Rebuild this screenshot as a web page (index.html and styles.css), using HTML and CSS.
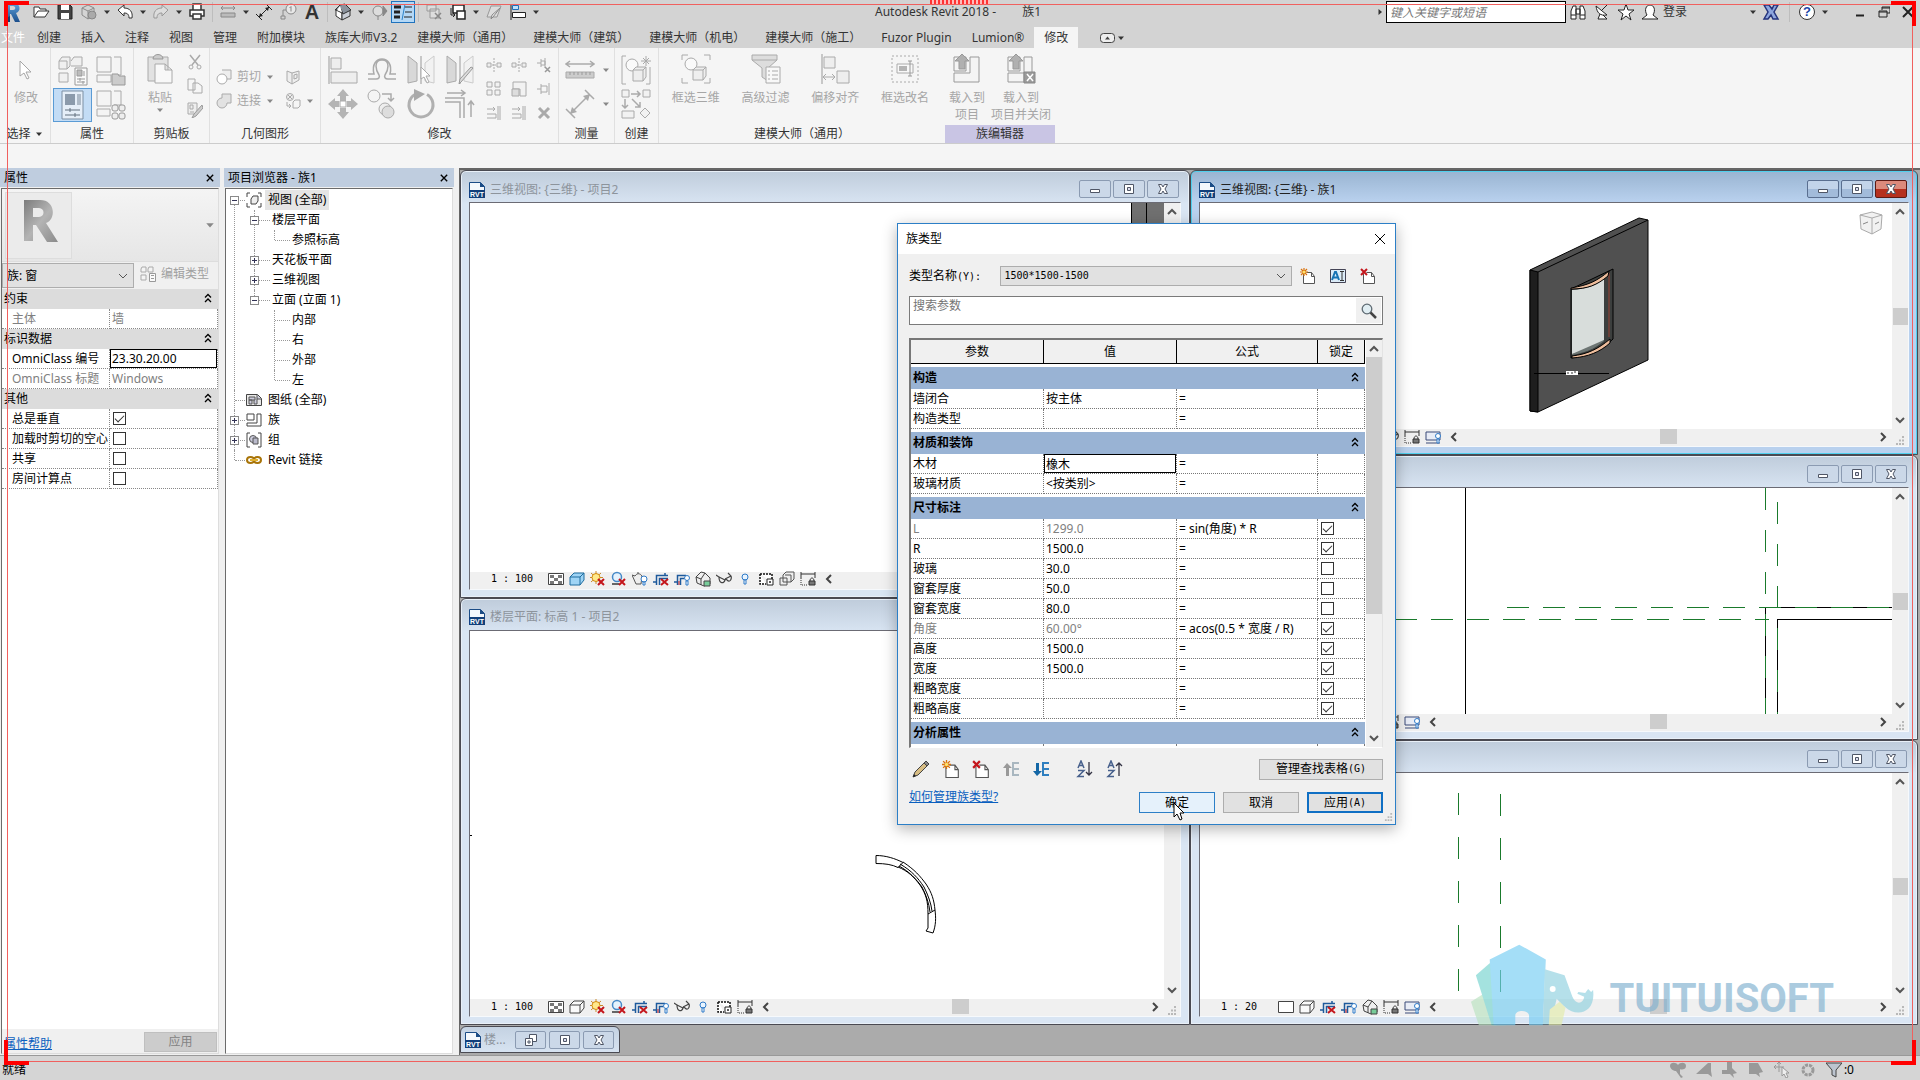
FILE: index.html
```html
<!DOCTYPE html>
<html lang="zh-CN">
<head>
<meta charset="utf-8">
<title>Autodesk Revit 2018 - 族1</title>
<link rel="stylesheet" href="styles.css">
</head>
<body>
<svg class="defs" aria-hidden="true">
  <defs>
    <linearGradient id="blueR" x1="0" y1="0" x2="0" y2="1"><stop offset="0" stop-color="#5fa3dc"/><stop offset="1" stop-color="#1c4f8c"/></linearGradient>
    <linearGradient id="greyR" x1="0" y1="0" x2="1" y2="1"><stop offset="0" stop-color="#7c7c7c"/><stop offset=".5" stop-color="#b4b4b4"/><stop offset="1" stop-color="#8b8b8b"/></linearGradient>
    <symbol id="caret" viewBox="0 0 8 8"><path d="M1 2.5h6L4 6z" fill="currentColor"/></symbol>
    <symbol id="logo" viewBox="0 0 24 24"><path fill="url(#blueR)" fill-rule="evenodd" d="M5 3h9c7 0 7 9 2 10l4 9h-5l-4-8h-1v8H5zm5 3v4h3c3 0 3-4 0-4z"/><path d="M5 19l5-3v6H5z" fill="#153d70"/></symbol>
    <!-- quick access toolbar -->
    <symbol id="open" viewBox="0 0 18 18"><path d="M2 14V4h5l1 2h6v3" fill="#fff" stroke="#333"/><path d="M2 14l4-6h11l-4 6z" fill="#fff" stroke="#333"/></symbol>
    <symbol id="save" viewBox="0 0 18 18"><path d="M2 2h12l2 2v12H2z" fill="#444" stroke="#222"/><path d="M5 2h8v5H5zM5 10h8v6H5z" fill="#fff"/></symbol>
    <symbol id="sync" viewBox="0 0 18 18"><path d="M2 5l6-3 6 3v7l-6 4-6-4zM2 5l6 3 6-3M8 8v8" fill="#d4d4d4" stroke="#8a8a8a"/><circle cx="12" cy="12" r="4" fill="#aaa" stroke="#888"/></symbol>
    <symbol id="undo" viewBox="0 0 18 18"><path d="M2 7l6-5v3c6 0 9 4 8 10h-3c0-4-2-5-5-5v3z" fill="#fff" stroke="#333"/></symbol>
    <symbol id="redo" viewBox="0 0 18 18"><path d="M16 7l-6-5v3C4 5 1 9 2 15h3c0-4 2-5 5-5v3z" fill="#ddd" stroke="#999"/></symbol>
    <symbol id="print" viewBox="0 0 18 18"><path d="M5 7V1h8v6M2 7h14v6H2z" fill="#fff" stroke="#333" stroke-width="1.5"/><path d="M5 11h8v5H5z" fill="#fff" stroke="#333" stroke-width="1.5"/></symbol>
    <symbol id="measure" viewBox="0 0 18 18"><path d="M2 5h14M4 3L2 5l2 2M14 3l2 2-2 2" fill="none" stroke="#888"/><path d="M2 10h14v4H2z" fill="#bbb" stroke="#888"/></symbol>
    <symbol id="dim" viewBox="0 0 18 18"><path d="M4 14L14 4M1 11l6 6M11 1l6 6" fill="none" stroke="#222"/><path d="M4 14l1-4 3 3zM14 4l-1 4-3-3z" fill="#222"/></symbol>
    <symbol id="tag" viewBox="0 0 18 18"><circle cx="12" cy="6" r="5" fill="#e8e8e8" stroke="#888"/><path d="M12 3.500v5M10.500 5L12 3.500M7 7H4v6M2 13h4v3H2z" fill="none" stroke="#888"/></symbol>
    <symbol id="house" viewBox="0 0 18 18"><path d="M2 7l6 3v7l-6-4z" fill="#fff" stroke="#333"/><path d="M8 10l8-3v6l-8 4z" fill="#c9ced6" stroke="#333"/><path d="M1 7l5-5 5-1 6 6-8 4-2-5z" fill="#8a929c" stroke="#333"/><path d="M3 7l3-4 2 6z" fill="#fff"/></symbol>
    <symbol id="section" viewBox="0 0 18 18"><circle cx="8" cy="8" r="5" fill="#ddd" stroke="#888"/><path d="M13 3l4 5-4 5zM8 13v4" fill="#888" stroke="#888"/></symbol>
    <symbol id="thin" viewBox="0 0 18 18"><path d="M0 4h7M0 9h6M0 14h6" stroke="#222" stroke-width="3"/><path d="M11 1L8 17" stroke="#2c83c9"/><path d="M11 4h7M11 9h7M10 14h8" stroke="#222"/></symbol>
    <symbol id="closehid" viewBox="0 0 18 18"><path d="M2 2h9v6H2zM5 6h9v9H5z" fill="#ddd" stroke="#999"/><path d="M10 10l6 6M16 10l-6 6" stroke="#888" stroke-width="1.500"/></symbol>
    <symbol id="switch" viewBox="0 0 18 18"><path d="M4 2h11v8H4z" fill="#fff" stroke="#222" stroke-width="1.500"/><path d="M8 8h8v8H8z" fill="#fff" stroke="#222" stroke-width="1.500"/><path d="M2 5v7h4M4 10l2 2-2 2" fill="none" stroke="#222"/></symbol>
    <symbol id="erase" viewBox="0 0 18 18"><path d="M2 14L6 3h10l-4 11z" fill="#ddd" stroke="#999"/><path d="M15 5l-7 9-2 2 1-4z" fill="#eee" stroke="#888"/></symbol>
    <symbol id="align" viewBox="0 0 18 18"><path d="M2 1v16" stroke="#222"/><path d="M3.500 2.500h6v4h-6z" fill="#bfe0fa" stroke="#1f6fb8"/><path d="M3.500 9.500h13v5h-13z" fill="#fff" stroke="#222"/></symbol>
    <symbol id="bino" viewBox="0 0 18 18"><path d="M2 16V8l2-5h3v13zM16 16V8l-2-5h-3v13zM7 6h4v5H7zM2 12h5M11 12h5" fill="#fff" stroke="#222"/></symbol>
    <symbol id="dish" viewBox="0 0 18 18"><path d="M3 3c1 7 4 10 11 9zM9 7l5-5M7 11l-2 5h9l-4-4" fill="#fff" stroke="#222"/></symbol>
    <symbol id="star" viewBox="0 0 18 18"><path d="M9 1l2 6h6l-5 4 2 6-5-4-5 4 2-6-5-4h6z" fill="#fff" stroke="#222"/></symbol>
    <symbol id="person" viewBox="0 0 18 18"><path d="M6 12c-3-5-1-10 3-10s6 5 3 10l5 4H1z" fill="#fff" stroke="#222"/></symbol>
    <symbol id="exch" viewBox="0 0 18 18"><path d="M2 2h5l3 4 2-4h4l-4 7 4 7h-5l-2-4-3 4H2l4-7z" fill="#8ea6de" stroke="#25337c" stroke-width="1.500"/></symbol>
    <!-- ribbon -->
    <symbol id="cursor" viewBox="0 0 14 20"><path d="M1 1v15l4-3 3 6 2-1-3-6h5z" fill="#fff" stroke="currentColor"/></symbol>
    <symbol id="types" viewBox="0 0 30 30"><path d="M1 5l3-4h8v9l-3 3H1zM13 5l3-4h8v9H13M1 17h9v9H1zM1 5h8v8" fill="#f0f0f0" stroke="#aaa"/><path d="M17 12h12v17H17z" fill="#fafafa" stroke="#999"/><path d="M19 14h5v6h-5zM26 15v5" fill="#bbb" stroke="#999"/><path d="M19 23h8M19 26h8M22 22v3M25 25v3" stroke="#999"/></symbol>
    <symbol id="family" viewBox="0 0 30 30"><path d="M1 1h14v15H1zM18 1h7v18h-7M1 19h14v7H1z" fill="#f4f4f4" stroke="#aaa"/><path d="M16 18h6l1 2h6v9H16z" fill="#ccc" stroke="#999"/></symbol>
    <symbol id="props" viewBox="0 0 24 30"><path d="M1 1h21v28H1z" fill="#e5eef8" stroke="#7d8fa3"/><path d="M4 4h10v11H4z" fill="#8b9aab"/><path d="M16 4h4v11h-4z" fill="#aebac7"/><path d="M4 20h15M4 25h15M9 18v4M14 23v4" stroke="#62707e"/></symbol>
    <symbol id="cat" viewBox="0 0 30 30"><path d="M1 1h14v15H1zM18 1h7v14h-7M1 19h13v7H1z" fill="#f4f4f4" stroke="#aaa"/><rect x="16" y="15" width="6" height="6" rx="2" fill="#eee" stroke="#999"/><rect x="23" y="15" width="6" height="6" rx="2" fill="#eee" stroke="#999"/><rect x="16" y="23" width="6" height="6" rx="2" fill="#eee" stroke="#999"/><rect x="23" y="23" width="6" height="6" rx="2" fill="#eee" stroke="#999"/></symbol>
    <symbol id="paste" viewBox="0 0 26 30"><path d="M1 3h20v24H1z" fill="#e2e2e2" stroke="#aaa"/><path d="M6 5c0-6 10-6 10 0z" fill="#ccc" stroke="#999"/><path d="M8 10h10l7 6v13H8zM18 10v6h7" fill="#f8f8f8" stroke="#aaa"/></symbol>
    <symbol id="cut" viewBox="0 0 16 16"><path d="M3 1l8 10M13 1L5 11" stroke="#aaa" stroke-width="1.500"/><circle cx="4" cy="13" r="2" fill="none" stroke="#aaa"/><circle cx="12" cy="13" r="2" fill="none" stroke="#aaa"/></symbol>
    <symbol id="copy" viewBox="0 0 16 16"><path d="M1 1h7v11H1zM6 5h5l4 3v7H6z" fill="#f6f6f6" stroke="#aaa"/></symbol>
    <symbol id="match" viewBox="0 0 16 16"><path d="M1 1h9v11H1zM3 3h3v4H3zM3 10h4" fill="#eee" stroke="#aaa"/><path d="M15 3L7 12l-2 4 4-2 7-8z" fill="#ccc" stroke="#999"/></symbol>
    <symbol id="joinA" viewBox="0 0 16 16"><path d="M6 1h9v9H9" fill="#eee" stroke="#aaa"/><circle cx="6" cy="10" r="5" fill="#fff" stroke="#aaa"/></symbol>
    <symbol id="joinB" viewBox="0 0 16 16"><path d="M6 1h9v9h-4a5 5 0 1 1-5-5z" fill="#e2e2e2" stroke="#aaa"/></symbol>
    <symbol id="cope" viewBox="0 0 16 16"><path d="M2 2l5 2 7-2v9l-7 4-5-3zM7 4v11M9 6l3-1v4l-3 1z" fill="#eee" stroke="#aaa"/></symbol>
    <symbol id="paintr" viewBox="0 0 16 16"><circle cx="5" cy="4" r="3.500" fill="#eee" stroke="#aaa"/><path d="M3 2l4 4M7 2L3 6M2 9v4h4M4 11l2 2-2 2M8 9l2-2h5v6l-2 2H8z" fill="none" stroke="#aaa"/></symbol>
    <symbol id="alignL" viewBox="0 0 30 30"><path d="M1 1v28" stroke="#999"/><path d="M3 3h10v11H3zM3 17h26v11H3z" fill="#eee" stroke="#aaa"/></symbol>
    <symbol id="offset" viewBox="0 0 30 30"><path d="M1 24h8c3 0 4-2 3-4-2-3-3-6-3-9 0-8 12-8 12 0 0 3-1 6-3 9-1 2 0 4 3 4h8M1 19h6c-5-20 21-20 16 0h6" fill="none" stroke="#aaa" stroke-width="1.500"/></symbol>
    <symbol id="mirrorA" viewBox="0 0 30 30"><path d="M2 1l9 7v18l-9 2z" fill="#d8d8d8" stroke="#aaa"/><path d="M28 1l-9 7v18l9 2z" fill="#f2f2f2" stroke="#ccc"/><path d="M15 1v28" stroke="#999"/><path d="M15 12v12l3-2 3 6 2-1-3-6h4z" fill="#fff" stroke="#aaa"/></symbol>
    <symbol id="mirrorB" viewBox="0 0 30 30"><path d="M2 1l9 7v18l-9 2z" fill="#d8d8d8" stroke="#aaa"/><path d="M28 1l-9 7v18l9 2z" fill="#f2f2f2" stroke="#ccc"/><path d="M15 1v28" stroke="#999"/><path d="M28 13L16 27l-2 2 1-5 11-12z" fill="#ddd" stroke="#999"/></symbol>
    <symbol id="move" viewBox="0 0 30 30"><path d="M15 0l6 7h-3v5h-6V7H9zM15 30l6-7h-3v-4h-6v4H9zM0 15l7-6v3h4v6H7v3zM30 15l-7-6v3h-4v6h4v3z" fill="#b4b4b4"/><path d="M12 12h6v6h-6z" fill="#fff" stroke="#aaa"/></symbol>
    <symbol id="copyR" viewBox="0 0 30 30"><circle cx="7" cy="7" r="6" fill="#f4f4f4" stroke="#aaa"/><circle cx="18" cy="20" r="6" fill="#eee" stroke="#aaa"/><circle cx="21" cy="23" r="6" fill="#ddd" stroke="#aaa"/><path d="M15 5h9v6M21 9l3 3 3-3" fill="none" stroke="#aaa" stroke-width="1.500"/></symbol>
    <symbol id="rotate" viewBox="0 0 30 30"><path d="M9 5.500a12 12 0 1 0 12 0" fill="none" stroke="#b0b0b0" stroke-width="3"/><path d="M8 0l11 5-11 7z" fill="#aaa"/></symbol>
    <symbol id="trim" viewBox="0 0 30 30"><path d="M0 9h19v20M0 13h15v16" fill="none" stroke="#aaa" stroke-width="1.500"/><path d="M2 4h17M16 1l4 3-4 3M26 28V12M23 16l3-4 3 4" fill="none" stroke="#aaa" stroke-width="1.500"/></symbol>
    <symbol id="split" viewBox="0 0 16 16"><path d="M1 6h4v4H1zM11 6h4v4h-4z" fill="#eee" stroke="#aaa"/><path d="M8 1v14M6 8h4" stroke="#aaa" stroke-dasharray="2 1"/></symbol>
    <symbol id="pinx" viewBox="0 0 16 16"><path d="M1 6h4M5 2v8M5 4h4v4H5M9 1v10" fill="none" stroke="#aaa"/><path d="M9 10l5 5M14 10l-5 5" stroke="#999" stroke-width="1.500"/></symbol>
    <symbol id="pin" viewBox="0 0 16 16"><path d="M1 8h4M5 3v10M5 5h6v6H5M13 2v12" fill="none" stroke="#aaa"/></symbol>
    <symbol id="array" viewBox="0 0 16 16"><path d="M1 1h5v5H1zM9 1h5v5H9zM1 9h5v5H1zM9 9h5v5H9z" fill="#f2f2f2" stroke="#aaa"/></symbol>
    <symbol id="scale" viewBox="0 0 16 16"><path d="M2 1h13v14H9V8H2z" fill="#f2f2f2" stroke="#aaa"/><path d="M1 8h7v7H1z" fill="#ddd" stroke="#aaa"/></symbol>
    <symbol id="ext" viewBox="0 0 16 16"><path d="M1 4h8M7 2l2 2-2 2M1 9h9v4H1M12 1v14M14 1v14" fill="none" stroke="#aaa"/></symbol>
    <symbol id="del" viewBox="0 0 16 16"><path d="M3 3l10 10M13 3L3 13" stroke="#aaa" stroke-width="3"/></symbol>
    <symbol id="ruler" viewBox="0 0 30 30"><path d="M1 9h28M5 6L1 9l4 3M25 6l4 3-4 3" fill="none" stroke="#aaa" stroke-width="1.500"/><path d="M1 17h28v6H1z" fill="#ccc" stroke="#aaa"/><path d="M5 17v3M9 17v3M13 17v3M17 17v3M21 17v3M25 17v3" stroke="#999"/></symbol>
    <symbol id="dimL" viewBox="0 0 30 30"><path d="M5 25L25 5M1 20l9 9M20 1l9 9" stroke="#aaa" stroke-width="1.500"/><path d="M5 25l2-7 5 5zM25 5l-2 7-5-5z" fill="#aaa"/></symbol>
    <symbol id="create" viewBox="0 0 30 30"><path d="M5 1H1v28h4M25 29h4V12" fill="none" stroke="#aaa"/><circle cx="11" cy="10" r="6" fill="#fafafa" stroke="#aaa"/><path d="M12 15l3-3h10v10l-3 4H12zM12 15h10v11M22 15l3-3" fill="#eee" stroke="#aaa"/><path d="M25 1v10M20 6h10M22 3l6 6M28 3l-6 6" stroke="#aaa"/></symbol>
    <symbol id="flow" viewBox="0 0 30 30"><path d="M1 1h7v7H1zM22 1h7v7h-7zM1 22h12v7H1zM24 19l5 5-5 5-5-5z" fill="#f2f2f2" stroke="#aaa"/><path d="M10 5h9M16 2l3 3-3 3M4 10v9M1 16l3 3 3-3M11 10l8 8M19 13v5h-5" fill="none" stroke="#aaa" stroke-width="1.500"/></symbol>
    <symbol id="sel3d" viewBox="0 0 30 30"><path d="M1 6V1h6M23 1h6v5M1 24v5h6M23 29h6v-5" fill="none" stroke="#aaa"/><circle cx="10" cy="10" r="6" fill="#fafafa" stroke="#aaa"/><path d="M12 16l3-3h10v9l-3 4H12zM12 16h10v10M22 16l3-3" fill="#eee" stroke="#aaa"/></symbol>
    <symbol id="filt" viewBox="0 0 30 30"><path d="M1 1h25v5L17 14v13l-6-4v-9L1 6z" fill="#ddd" stroke="#aaa"/><path d="M1 6h25" stroke="#aaa"/><path d="M15 13h14v16H15zM17 17h2M17 21h2M17 25h2M21 17h6M21 21h6M21 25h6" fill="#f8f8f8" stroke="#aaa"/></symbol>
    <symbol id="offal" viewBox="0 0 30 30"><path d="M2 0v30" stroke="#999"/><path d="M4 3h11v11H4zM17 17h12v12H17z" fill="#eee" stroke="#aaa"/><path d="M3 23h12M6 20l-3 3 3 3M12 20l3 3-3 3" fill="none" stroke="#aaa"/></symbol>
    <symbol id="rename" viewBox="0 0 30 30"><path d="M2 2h26v26H2z" fill="none" stroke="#aaa" stroke-dasharray="2 2"/><path d="M7 10h16v9H7z" fill="#f8f8f8" stroke="#aaa"/><path d="M9 12h8v5H9z" fill="#b4b4b4"/><path d="M20 7v15M18 7h4M18 22h4" stroke="#999"/></symbol>
    <symbol id="load" viewBox="0 0 30 30"><path d="M2 3h12v14H2zM18 3h9v25H2v-9h16z" fill="#f4f4f4" stroke="#999"/><path d="M10 0l7 7h-4v8H7V7H3z" fill="#b0b0b0" stroke="#999"/></symbol>
    <symbol id="loadc" viewBox="0 0 30 30"><path d="M2 3h12v14H2zM18 3h8v16H18zM2 19h16v9H2z" fill="#f4f4f4" stroke="#999"/><path d="M10 0l7 7h-4v8H7V7H3z" fill="#b0b0b0" stroke="#999"/><path d="M18 18h11v11H18z" fill="#9a9a9a" stroke="#888"/><path d="M21 20l6 7M27 20l-6 7" stroke="#fff" stroke-width="1.500"/></symbol>
    <!-- view windows -->
    <symbol id="rvt" viewBox="0 0 16 16"><path d="M.5.500h11l4 4v11H.500z" fill="#f4f8fc" stroke="#1b4c86"/><path d="M11 0l5 5h-5z" fill="#1b4c86"/><path d="M0 8h16v8H0z" fill="#123f7a"/><text x="8" y="14.500" class="rvt-text" text-anchor="middle">RVT</text></symbol>
    <symbol id="wmin" viewBox="0 0 12 12"><path d="M1.500 6.500h9v3h-9z" fill="#fff" stroke="#4f5666"/></symbol>
    <symbol id="wmax" viewBox="0 0 12 12"><path d="M1.500 1.500h9v9h-9z" fill="#fff" stroke="#4f5666"/><path d="M4.500 4.500h3v3h-3z" fill="#dde" stroke="#4f5666"/></symbol>
    <symbol id="wcls" viewBox="0 0 12 12"><path d="M1.500 1.500h3L6 4l1.500-2.500h3L8 6l2.500 4.500h-3L6 8l-1.500 2.500h-3L4 6z" fill="#fff" stroke="#4f5666"/></symbol>
    <symbol id="wres" viewBox="0 0 12 12"><path d="M4.500.5h7v7h-7z" fill="#fff" stroke="#4f5666"/><path d="M.5 4.500h7v7h-7z" fill="#fff" stroke="#4f5666"/><path d="M3 7h2v2H3z" fill="none" stroke="#4f5666"/></symbol>
    <symbol id="v-fine" viewBox="0 0 16 16"><path d="M.5 2.500h15v11H.500z" fill="#fff" stroke="#444"/><path d="M2 4h4v3H2zM10 4h4v3h-4zM6 7h4v3H6zM2 10h4v3H2zM10 10h4v3h-4z" fill="#777"/></symbol>
    <symbol id="v-rect" viewBox="0 0 16 16"><path d="M.5 2.500h15v11H.500z" fill="#fff" stroke="#444"/></symbol>
    <symbol id="v-cubeb" viewBox="0 0 16 16"><path d="M1 6l4-4h10v7l-4 5H1zM1 6h10v8M11 6l4-4" fill="#9fd4f5" stroke="#1f6d9f"/></symbol>
    <symbol id="v-cube" viewBox="0 0 16 16"><path d="M1 6l4-4h10v7l-4 5H1zM1 6h10v8M11 6l4-4" fill="#fafafa" stroke="#444"/></symbol>
    <symbol id="v-sun" viewBox="0 0 16 16"><path d="M6 0v13M0 6.500h13M1 2l10 9M11 2L1 11" stroke="#c98a2a"/><circle cx="6" cy="6.500" r="4" fill="#ffe98a" stroke="#d48a10"/><path d="M8 8l6 6M14 8l-6 6" stroke="#c4161c" stroke-width="2"/></symbol>
    <symbol id="v-shadow" viewBox="0 0 16 16"><path d="M1 13h7" stroke="#666" stroke-width="2"/><circle cx="6" cy="6" r="4.500" fill="#e4f2fd" stroke="#4689c8" stroke-width="1.500"/><path d="M8 8l6 6M14 8l-6 6" stroke="#c4161c" stroke-width="2"/></symbol>
    <symbol id="v-render" viewBox="0 0 16 16"><path d="M0 4l3 1c2-3 5-3 7 0l-1 8H4zM5 2h2" fill="#eee" stroke="#555"/><circle cx="12" cy="8" r="3" fill="#fff" stroke="#2f7ac8"/><path d="M11 11h2v3h-2z" fill="#fff" stroke="#2f7ac8"/></symbol>
    <symbol id="v-crop" viewBox="0 0 16 16"><path d="M0 11h3M3.500 14V4.500H15M6.500 14V7.500H15M12 2v2" fill="none" stroke="#1e5a9c" stroke-width="1.500"/><path d="M8 8l7 6M15 8l-7 6" stroke="#c4161c" stroke-width="2"/></symbol>
    <symbol id="v-cropv" viewBox="0 0 16 16"><path d="M0 11h3M3.500 14V4.500H12M6.500 14V7.500H10" fill="none" stroke="#1e5a9c" stroke-width="1.500"/><circle cx="13" cy="7" r="2.500" fill="#fff" stroke="#2f7ac8"/><path d="M12 10h2v4h-2z" fill="#fff" stroke="#2f7ac8"/><path d="M5 10v4" stroke="#c4161c"/></symbol>
    <symbol id="v-lock3d" viewBox="0 0 16 16"><path d="M1 6l5-5 4 1 5 5v6l-6 2-7-3zM1 6l5 2 4-6M6 8v6" fill="#eee" stroke="#444"/><path d="M9 10h6v5H9z" fill="#7c9" stroke="#444"/></symbol>
    <symbol id="v-glass" viewBox="0 0 16 16"><path d="M0 4l3 2c0 7 5 7 6 3 1-1 1-1 2 0 3 3 5-1 4-4l-3-3M3 6l6 3M9 8l6-3" fill="none" stroke="#444" stroke-width="1.200"/></symbol>
    <symbol id="v-bulb" viewBox="0 0 16 16"><circle cx="8" cy="6" r="3" fill="#e8f4ff" stroke="#2f7ac8"/><path d="M7 9h2v4H7z" fill="#fff" stroke="#2f7ac8"/></symbol>
    <symbol id="v-temp" viewBox="0 0 16 16"><path d="M2 3h12v8M2 3v10h6" fill="#fff" stroke="#111" stroke-width="1.500" stroke-dasharray="2 1"/><path d="M9 8h6v6H9z" fill="#fff" stroke="#222"/><circle cx="12" cy="11" r="1" fill="#222"/></symbol>
    <symbol id="v-disp" viewBox="0 0 16 16"><path d="M4 4l3-3h8v7l-3 3H4zM1 7h7v7H1zM6 4h6v7" fill="#eee" stroke="#555"/></symbol>
    <symbol id="v-cons" viewBox="0 0 16 16"><path d="M1 1v6M15 1v6M1 3h14" stroke="#333"/><path d="M1 7v7h7" fill="none" stroke="#333" stroke-dasharray="1 1"/><path d="M9 10h6v4H9z" fill="#777" stroke="#333"/><path d="M10 10c0-4 4-4 4 0" fill="none" stroke="#333"/></symbol>
    <symbol id="v-prev" viewBox="0 0 16 16"><path d="M1 3h14v8H1zM1 14h14" fill="#e8ecf6" stroke="#3a4a78"/><circle cx="13" cy="7" r="2.500" fill="#fff" stroke="#2f7ac8"/><path d="M12 10h2v4h-2z" fill="#fff" stroke="#2f7ac8"/></symbol>
    <symbol id="left" viewBox="0 0 10 10"><path d="M7 1L3 5l4 4" fill="none" stroke="#444" stroke-width="2"/></symbol>
    <symbol id="right" viewBox="0 0 10 10"><path d="M3 1l4 4-4 4" fill="none" stroke="#444" stroke-width="2"/></symbol>
    <symbol id="up" viewBox="0 0 10 10"><path d="M1 7l4-4 4 4" fill="none" stroke="#555" stroke-width="2"/></symbol>
    <symbol id="down" viewBox="0 0 10 10"><path d="M1 3l4 4 4-4" fill="none" stroke="#555" stroke-width="2"/></symbol>
    <symbol id="grip" viewBox="0 0 10 10"><path d="M7 0h2v2H7zM4 3.500h2v2H4zM7 3.500h2v2H7zM1 7h2v2H1zM4 7h2v2H4zM7 7h2v2H7z" fill="#b8b8b8"/></symbol>
    <symbol id="chev" viewBox="0 0 8 10"><path d="M1 4.500l3-3 3 3M1 9l3-3 3 3" fill="none" stroke="#000" stroke-width="1.300"/></symbol>
    <symbol id="x" viewBox="0 0 10 10"><path d="M1 1l8 8M9 1L1 9" stroke="#000" stroke-width="1.700"/></symbol>
    <!-- dialog -->
    <symbol id="newp" viewBox="0 0 16 16"><path d="M3.500 5.500v10h11v-7l-3-4h-5M11.500 4.500v4h3" fill="#fff" stroke="#555"/><path d="M4 0v8M0 4h8M1 1l6 6M7 1L1 7" stroke="#d9720d" stroke-width="1.200"/><circle cx="4" cy="4" r="1.500" fill="#ffe26a"/></symbol>
    <symbol id="delp" viewBox="0 0 16 16"><path d="M3.500 5.500v10h11v-7l-3-4h-5M11.500 4.500v4h3" fill="#fff" stroke="#555"/><path d="M1 1l6 6M7 1L1 7" stroke="#c4161c" stroke-width="2"/></symbol>
    <symbol id="ren" viewBox="0 0 16 14"><path d="M.5.500h15v13H.500z" fill="#dcecf8" stroke="#445"/><path d="M2 11L5 3h1l3 8M3.500 8.500h4" fill="none" stroke="#1673b4" stroke-width="2"/><path d="M10 2.500h4M12 2.500v9M10 11.500h4" stroke="#333"/></symbol>
    <symbol id="mag" viewBox="0 0 16 16"><circle cx="6" cy="6" r="4.800" fill="#e0edf2" stroke="#5f6b73" stroke-width="1.300"/><path d="M9.500 9.500l5.500 5.500" stroke="#444" stroke-width="2.500"/></symbol>
    <symbol id="pencil" viewBox="0 0 18 18"><path d="M1 17l2-5L13 2l3 3L6 15z" fill="#d8bd83" stroke="#444"/><path d="M12 3l2-2 3 3-2 2z" fill="#888" stroke="#444"/><path d="M1 17l1-3 2 2z" fill="#222"/></symbol>
    <symbol id="mup" viewBox="0 0 18 18"><path d="M5 3L1 8h3v8h3V8h3z" fill="#999"/><path d="M10 3h7M10 9h7M10 15h7M11 3v12" fill="none" stroke="#a9b7c0" stroke-width="2"/></symbol>
    <symbol id="mdn" viewBox="0 0 18 18"><path d="M5 16l-4-5h3V3h3v8h3z" fill="#1467a6"/><path d="M10 3h7M10 9h7M10 15h7M11 3v12" fill="none" stroke="#2f7fc0" stroke-width="2"/></symbol>
    <symbol id="az" viewBox="0 0 16 18"><path d="M1 8l3-7 3 7M2 5.500h4M1 10.500h6l-6 6h6" fill="none" stroke="#47608c" stroke-width="1.500"/><path d="M12 2v13M9 12l3 3 3-3" fill="none" stroke="#334" stroke-width="1.300"/></symbol>
    <symbol id="za" viewBox="0 0 16 18"><path d="M1 8l3-7 3 7M2 5.500h4M1 10.500h6l-6 6h6" fill="none" stroke="#47608c" stroke-width="1.500"/><path d="M12 3v13M9 6l3-3 3 3" fill="none" stroke="#334" stroke-width="1.300"/></symbol>
  </defs>
</svg>

<header class="titlebar">
  <div class="qat">
    <svg class="applogo"><use href="#logo"/></svg>
    <button aria-label="打开"><svg><use href="#open"/></svg></button>
    <button aria-label="保存"><svg><use href="#save"/></svg></button>
    <button aria-label="同步"><svg><use href="#sync"/></svg></button><i class="cr"><svg><use href="#caret"/></svg></i>
    <button aria-label="放弃"><svg><use href="#undo"/></svg></button><i class="cr"><svg><use href="#caret"/></svg></i>
    <button aria-label="重做"><svg><use href="#redo"/></svg></button><i class="cr"><svg><use href="#caret"/></svg></i>
    <button aria-label="打印"><svg><use href="#print"/></svg></button><i class="sep"></i>
    <button aria-label="测量"><svg><use href="#measure"/></svg></button><i class="cr"><svg><use href="#caret"/></svg></i>
    <button aria-label="尺寸标注"><svg><use href="#dim"/></svg></button>
    <button aria-label="标记"><svg><use href="#tag"/></svg></button>
    <button class="bigA">A</button><i class="sep"></i>
    <button aria-label="三维视图"><svg><use href="#house"/></svg></button><i class="cr"><svg><use href="#caret"/></svg></i>
    <button aria-label="剖面"><svg><use href="#section"/></svg></button>
    <button class="on" aria-label="细线"><svg><use href="#thin"/></svg></button><i class="sep"></i>
    <button aria-label="关闭隐藏窗口"><svg><use href="#closehid"/></svg></button>
    <button aria-label="切换窗口"><svg><use href="#switch"/></svg></button><i class="cr"><svg><use href="#caret"/></svg></i>
    <button aria-label="编辑"><svg><use href="#erase"/></svg></button>
    <button aria-label="对齐"><svg><use href="#align"/></svg></button><i class="cr"><svg><use href="#caret"/></svg></i>
  </div>
  <div class="apptitle"><span>Autodesk Revit 2018 -</span><span>族1</span></div>
  <div class="info">
    <i class="cr side"><svg><use href="#caret"/></svg></i>
    <input class="infosearch" type="text" placeholder="键入关键字或短语" aria-label="键入关键字或短语">
    <button aria-label="搜索"><svg><use href="#bino"/></svg></button>
    <button aria-label="通讯中心"><svg><use href="#dish"/></svg></button>
    <button aria-label="收藏夹"><svg><use href="#star"/></svg></button>
    <button class="login"><svg><use href="#person"/></svg>登录</button>
    <i class="cr"><svg><use href="#caret"/></svg></i>
    <button aria-label="Exchange"><svg><use href="#exch"/></svg></button><i class="sep"></i>
    <button class="help" aria-label="帮助"><b>?</b></button><i class="cr"><svg><use href="#caret"/></svg></i>
    <div class="wctl">
      <button aria-label="最小化"><svg viewBox="0 0 12 12"><path d="M2 9.500h8" stroke="#222" stroke-width="2"/></svg></button>
      <button aria-label="还原"><svg viewBox="0 0 12 12"><path d="M4 4V1h8v6H9M4 2h8M1 5h8v6H1zM1 6h8" fill="none" stroke="#222"/></svg></button>
      <button aria-label="关闭"><svg viewBox="0 0 12 12"><path d="M1 1l10 10M11 1L1 11" stroke="#222" stroke-width="2"/></svg></button>
    </div>
  </div>
</header>

<nav class="tabs">
  <a class="file" href="#">文件</a><a href="#">创建</a><a href="#">插入</a><a href="#">注释</a><a href="#">视图</a><a href="#">管理</a><a href="#">附加模块</a><a href="#">族库大师V3.2</a><a href="#">建模大师（通用）</a><a href="#">建模大师（建筑）</a><a href="#">建模大师（机电）</a><a href="#">建模大师（施工）</a><a href="#">Fuzor Plugin</a><a href="#">Lumion®</a><a class="cur" href="#">修改</a>
  <button class="rmin" aria-label="最小化功能区"><svg class="pill" viewBox="0 0 15 10"><rect x=".5" y=".5" width="14" height="9" rx="3" fill="#eee" stroke="#444"/><path d="M5 6.500h5L7.500 3.500z" fill="#444"/></svg><svg><use href="#caret"/></svg></button>
</nav>

<section class="ribbon">
  <div class="panel p-sel"><div class="tools"><button class="big"><svg class="cur20"><use href="#cursor"/></svg><span>修改</span></button></div><h2>选择 <svg><use href="#caret"/></svg></h2></div>
  <div class="panel p-prop"><div class="tools g2">
    <button><svg><use href="#types"/></svg></button><button><svg><use href="#family"/></svg></button>
    <button class="on"><svg><use href="#props"/></svg></button><button><svg><use href="#cat"/></svg></button>
  </div><h2>属性</h2></div>
  <div class="panel p-clip"><div class="tools">
    <button class="big"><svg><use href="#paste"/></svg><span>粘贴</span><svg class="c8"><use href="#caret"/></svg></button>
    <div class="col3"><button><svg><use href="#cut"/></svg></button><button><svg><use href="#copy"/></svg></button><button><svg><use href="#match"/></svg></button></div>
  </div><h2>剪贴板</h2></div>
  <div class="panel p-geo"><div class="tools geo">
    <button><svg><use href="#joinA"/></svg><span>剪切</span><svg class="c8"><use href="#caret"/></svg></button><button><svg><use href="#cope"/></svg></button>
    <button><svg><use href="#joinB"/></svg><span>连接</span><svg class="c8"><use href="#caret"/></svg></button><button><svg><use href="#paintr"/></svg><svg class="c8"><use href="#caret"/></svg></button>
  </div><h2>几何图形</h2></div>
  <div class="panel p-mod"><div class="tools">
    <div class="g4">
      <button><svg><use href="#alignL"/></svg></button><button><svg><use href="#offset"/></svg></button><button><svg><use href="#mirrorA"/></svg></button><button><svg><use href="#mirrorB"/></svg></button>
      <button><svg><use href="#move"/></svg></button><button><svg><use href="#copyR"/></svg></button><button><svg><use href="#rotate"/></svg></button><button><svg><use href="#trim"/></svg></button>
    </div>
    <div class="g3">
      <button><svg><use href="#split"/></svg></button><button><svg><use href="#split"/></svg></button><button><svg><use href="#pinx"/></svg></button>
      <button><svg><use href="#array"/></svg></button><button><svg><use href="#scale"/></svg></button><button><svg><use href="#pin"/></svg></button>
      <button><svg><use href="#ext"/></svg></button><button><svg><use href="#ext"/></svg></button><button><svg><use href="#del"/></svg></button>
    </div>
  </div><h2>修改</h2></div>
  <div class="panel p-mea"><div class="tools v2">
    <button><svg><use href="#ruler"/></svg><svg class="c8"><use href="#caret"/></svg></button>
    <button><svg><use href="#dimL"/></svg><svg class="c8"><use href="#caret"/></svg></button>
  </div><h2>测量</h2></div>
  <div class="panel p-cre"><div class="tools v2"><button><svg><use href="#create"/></svg></button><button><svg><use href="#flow"/></svg></button></div><h2>创建</h2></div>
  <div class="panel p-gen"><div class="tools spread">
    <button class="big"><svg><use href="#sel3d"/></svg><span>框选三维</span></button>
    <button class="big"><svg><use href="#filt"/></svg><span>高级过滤</span></button>
    <button class="big"><svg><use href="#offal"/></svg><span>偏移对齐</span></button>
    <button class="big"><svg><use href="#rename"/></svg><span>框选改名</span></button>
  </div><h2>建模大师（通用）</h2></div>
  <div class="panel p-fam"><div class="tools">
    <button class="big"><svg><use href="#load"/></svg><span>载入到<br>项目</span></button>
    <button class="big"><svg><use href="#loadc"/></svg><span>载入到<br>项目并关闭</span></button>
  </div><h2>族编辑器</h2></div>
</section>

<main class="work">
  <aside class="dock props">
    <div class="dockhead"><h2>属性</h2><button aria-label="关闭"><svg><use href="#x"/></svg></button></div>
    <div class="dockbody">
      <div class="preview"><div class="thumb"><svg viewBox="0 0 36 44"><path fill="url(#greyR)" fill-rule="evenodd" d="M1 1h16c16 0 16 20 6 23l12 19H24L13 26H10v16H1zm9 8v9h6c6 0 6-9 0-9z"/></svg></div><svg class="c8"><use href="#caret"/></svg></div>
      <div class="typerow">
        <select aria-label="类型过滤器"><option>族: 窗</option></select>
        <button class="edittype"><svg viewBox="0 0 16 16"><path d="M1 3l1-2h4v5H1zM8 3l1-2h4v5H8zM1 9h5v5H1z" fill="#f4f4f4" stroke="#aaa"/><path d="M9.500 7.500h6v8h-6zM11 9.500h3M11 12.500h3" fill="#fafafa" stroke="#999"/></svg>编辑类型</button>
      </div>
      <table class="ptable">
        <tbody>
        <tr class="grp"><th colspan="2">约束<svg><use href="#chev"/></svg></th></tr>
        <tr class="dis"><td>主体</td><td>墙</td></tr>
        <tr class="grp"><th colspan="2">标识数据<svg><use href="#chev"/></svg></th></tr>
        <tr><td><label for="omni">OmniClass 编号</label></td><td class="edit"><input id="omni" type="text" value="23.30.20.00"></td></tr>
        <tr class="dis"><td>OmniClass 标题</td><td>Windows</td></tr>
        <tr class="grp"><th colspan="2">其他<svg><use href="#chev"/></svg></th></tr>
        <tr><td><label for="c1">总是垂直</label></td><td><input id="c1" type="checkbox" checked></td></tr>
        <tr><td><label for="c2">加载时剪切的空心</label></td><td><input id="c2" type="checkbox"></td></tr>
        <tr><td><label for="c3">共享</label></td><td><input id="c3" type="checkbox"></td></tr>
        <tr><td><label for="c4">房间计算点</label></td><td><input id="c4" type="checkbox"></td></tr>
        </tbody>
      </table>
      <div class="dockfoot"><a href="#">属性帮助</a><button disabled>应用</button></div>
    </div>
  </aside>

  <aside class="dock browser">
    <div class="dockhead"><h2>项目浏览器 - 族1</h2><button aria-label="关闭"><svg><use href="#x"/></svg></button></div>
    <div class="dockbody">
      <ul class="tree">
        <li><div class="node"><i class="ex"></i><svg viewBox="0 0 16 16"><path d="M4 1H1v4M12 1h3v4M1 11v4h3M15 11v4h-3" fill="none" stroke="#444"/><path d="M5 7l2-3h5v5l-2 3H5z" fill="#eee" stroke="#444"/></svg><span class="sel">视图 (全部)</span></div>
          <ul>
            <li><div class="node"><i class="ex"></i>楼层平面</div><ul class="leaf"><li><div class="node">参照标高</div></li></ul></li>
            <li><div class="node"><i class="ex plus"></i>天花板平面</div></li>
            <li><div class="node"><i class="ex plus"></i>三维视图</div></li>
            <li><div class="node"><i class="ex"></i>立面 (立面 1)</div><ul class="leaf"><li><div class="node">内部</div></li><li><div class="node">右</div></li><li><div class="node">外部</div></li><li><div class="node">左</div></li></ul></li>
          </ul></li>
        <li><div class="node"><i class="no"></i><svg viewBox="0 0 16 16"><path d="M.5 2.500h11l4 4v7H.500z" fill="#e8e8e8" stroke="#444"/><path d="M3 5h6v3H3zM3 8h3v4H3zM11 3v4h4M8 8v4h3V7" fill="#ccd" stroke="#555"/></svg><span>图纸 (全部)</span></div></li>
        <li><div class="node"><i class="ex plus"></i><svg viewBox="0 0 16 16"><path d="M1 2h7v6H1zM11 2h4v12H1v-3h10z" fill="#fff" stroke="#444"/></svg><span>族</span></div></li>
        <li><div class="node"><i class="ex plus"></i><svg viewBox="0 0 16 16"><path d="M4 1H1v14h3M12 1h3v14h-3" fill="none" stroke="#444"/><circle cx="7" cy="7" r="3.500" fill="#ccd" stroke="#555"/><path d="M7 6h5v6H7z" fill="#bbc" stroke="#555"/></svg><span>组</span></div></li>
        <li><div class="node"><i class="no"></i><svg viewBox="0 0 16 16"><path d="M1 8c0-4 7-4 7 0s-7 4-7 0zM8 8c0-4 7-4 7 0s-7 4-7 0z" fill="none" stroke="#a87408" stroke-width="2"/><path d="M4 8h8" stroke="#e0b030" stroke-width="2"/></svg><span>Revit 链接</span></div></li>
      </ul>
    </div>
  </aside>

  <section class="mdi">
    <div class="tiles">
      <div class="tilecol">
        <article class="win">
          <header><svg><use href="#rvt"/></svg><h3>三维视图: {三维} - 项目2</h3><div class="wb"><button><svg><use href="#wmin"/></svg></button><button><svg><use href="#wmax"/></svg></button><button><svg><use href="#wcls"/></svg></button></div></header>
          <div class="view">
            <div class="canvas end"><svg width="33" height="368"><path d="M0 0h33v368H0z" fill="#707070"/><path d="M.5 0v368M15.500 0v368" stroke="#000"/></svg></div>
            <div class="vs"><svg><use href="#up"/></svg><i></i><svg><use href="#down"/></svg></div>
            <div class="vc"><span class="scale">1 : 100</span><svg><use href="#v-fine"/></svg><svg><use href="#v-cubeb"/></svg><svg><use href="#v-sun"/></svg><svg><use href="#v-shadow"/></svg><svg><use href="#v-render"/></svg><svg><use href="#v-crop"/></svg><svg><use href="#v-cropv"/></svg><svg><use href="#v-lock3d"/></svg><svg><use href="#v-glass"/></svg><svg><use href="#v-bulb"/></svg><svg><use href="#v-temp"/></svg><svg><use href="#v-disp"/></svg><svg><use href="#v-cons"/></svg>
              <div class="hs"><svg><use href="#left"/></svg><i></i><svg><use href="#right"/></svg></div></div>
            <div class="gr"><svg><use href="#grip"/></svg></div>
          </div>
        </article>
        <article class="win">
          <header><svg><use href="#rvt"/></svg><h3>楼层平面: 标高 1 - 项目2</h3><div class="wb"><button><svg><use href="#wmin"/></svg></button><button><svg><use href="#wmax"/></svg></button><button><svg><use href="#wcls"/></svg></button></div></header>
          <div class="view">
            <div class="canvas"><svg width="690" height="368"><g fill="none" stroke="#000"><path d="M0 204.500h2M406 224.500v8c9 0 16 1 22 4l5-5c-8-4-17-7-27-7zM433 231c12 8 17 14 23 22 6 9 8 16 9 26l-7 4v14l-2 3 7 2c3-8 3-15 2-23M428 236c10 4 16 10 22 18 6 9 8 16 8 29M430 233c12 7 18 14 24 23 4 8 7 16 8 24M429 235c11 6 17 13 23 21 4 8 7 16 8 25"/></g></svg></div>
            <div class="vs"><svg><use href="#up"/></svg><i></i><svg><use href="#down"/></svg></div>
            <div class="vc"><span class="scale">1 : 100</span><svg><use href="#v-fine"/></svg><svg><use href="#v-cube"/></svg><svg><use href="#v-sun"/></svg><svg><use href="#v-shadow"/></svg><svg><use href="#v-crop"/></svg><svg><use href="#v-cropv"/></svg><svg><use href="#v-glass"/></svg><svg><use href="#v-bulb"/></svg><svg><use href="#v-temp"/></svg><svg><use href="#v-cons"/></svg>
              <div class="hs"><svg><use href="#left"/></svg><i></i><svg><use href="#right"/></svg></div></div>
            <div class="gr"><svg><use href="#grip"/></svg></div>
          </div>
        </article>
      </div>
      <div class="tilecol">
        <article class="win active">
          <header><svg><use href="#rvt"/></svg><h3>三维视图: {三维} - 族1</h3><div class="wb"><button><svg><use href="#wmin"/></svg></button><button><svg><use href="#wmax"/></svg></button><button class="red"><svg><use href="#wcls"/></svg></button></div></header>
          <div class="view">
            <div class="canvas"><svg width="693" height="226" viewBox="1 0 693 226" stroke-linejoin="round">
              <path d="M331 67l109-52 9 2v140l-110 52-8-1z" fill="#505050" stroke="#000"/>
              <path d="M331 67l8 2v140l-8-1z" fill="#1e1e1e" stroke="#000"/>
              <path d="M339 69l110-52" stroke="#000"/>
              <path d="M372 86l42-20v70c-12 12-26 17-42 19z" fill="#3c3f3e" stroke="#000"/>
              <path d="M373 87c14-1 24-4 32-12v62c-9 8-20 12-32 14z" fill="#d8dddb"/>
              <path d="M373 151l32-14v1c-9 8-20 12-32 14z" fill="#6d7573"/>
              <path d="M410 70v64" stroke="#6b4038" stroke-width="2"/>
              <path d="M372 85c18-3 26-7 38-17l-1 5c-11 9-20 13-37 13zM373 153c16-2 26-7 38-17v4c-10 9-22 14-38 15z" fill="#eebd9c" stroke="#000"/>
              <path d="M335 170.500h75" stroke="#000"/><path d="M367 168h12v4h-12z" fill="#fff"/><path d="M369 169v2M373 169v2M376 168v2" stroke="#333"/>
              <g fill="#f1f1f1" stroke="#aaa"><path d="M661 12l12-3 10 3-1 14-9 5-11-5z"/><path d="M661 12l12 3 10-3M673 15v16" fill="none"/><path d="M664 21l5-2M676 21l4-2" stroke="#888"/></g>
            </svg></div>
            <div class="vs"><svg><use href="#up"/></svg><i></i><svg><use href="#down"/></svg></div>
            <div class="vc"><span class="scale">1 : 20</span><svg><use href="#v-rect"/></svg><svg><use href="#v-cubeb"/></svg><svg><use href="#v-sun"/></svg><svg><use href="#v-crop"/></svg><svg><use href="#v-cropv"/></svg><svg><use href="#v-glass"/></svg><svg><use href="#v-cons"/></svg><svg><use href="#v-prev"/></svg>
              <div class="hs"><svg><use href="#left"/></svg><i></i><svg><use href="#right"/></svg></div></div>
            <div class="gr"><svg><use href="#grip"/></svg></div>
          </div>
        </article>
        <article class="win">
          <header><svg><use href="#rvt"/></svg><h3></h3><div class="wb"><button><svg><use href="#wmin"/></svg></button><button><svg><use href="#wmax"/></svg></button><button><svg><use href="#wcls"/></svg></button></div></header>
          <div class="view">
            <div class="canvas"><svg width="693" height="226" viewBox="1 0 693 226" fill="none">
              <path d="M266.500 0v226M566.500 120v106M578.500 132v94M566 119.500h128M578 131.500h116" stroke="#000"/>
              <path d="M308 119.500h386M160 131.500h410" stroke="#1a7a2c" stroke-dasharray="22 14"/>
              <path d="M566.500 0v226M578.500 14v212" stroke="#1a7a2c" stroke-dasharray="22 20"/>
            </svg></div>
            <div class="vs"><svg><use href="#up"/></svg><i></i><svg><use href="#down"/></svg></div>
            <div class="vc"><span class="scale">1 : 20</span><svg><use href="#v-rect"/></svg><svg><use href="#v-cube"/></svg><svg><use href="#v-crop"/></svg><svg><use href="#v-cropv"/></svg><svg><use href="#v-glass"/></svg><svg><use href="#v-cons"/></svg><svg><use href="#v-prev"/></svg>
              <div class="hs"><svg><use href="#left"/></svg><i></i><svg><use href="#right"/></svg></div></div>
            <div class="gr"><svg><use href="#grip"/></svg></div>
          </div>
        </article>
        <article class="win">
          <header><svg><use href="#rvt"/></svg><h3></h3><div class="wb"><button><svg><use href="#wmin"/></svg></button><button><svg><use href="#wmax"/></svg></button><button><svg><use href="#wcls"/></svg></button></div></header>
          <div class="view">
            <div class="canvas"><svg width="693" height="226" viewBox="1 0 693 226" fill="none"><path d="M259.500 20v204M301.500 21v200" stroke="#1a7a2c" stroke-dasharray="22 22"/></svg></div>
            <div class="vs"><svg><use href="#up"/></svg><i></i><svg><use href="#down"/></svg></div>
            <div class="vc"><span class="scale">1 : 20</span><svg><use href="#v-rect"/></svg><svg><use href="#v-cube"/></svg><svg><use href="#v-crop"/></svg><svg><use href="#v-cropv"/></svg><svg><use href="#v-lock3d"/></svg><svg><use href="#v-cons"/></svg><svg><use href="#v-prev"/></svg>
              <div class="hs"><svg><use href="#left"/></svg><i></i><svg><use href="#right"/></svg></div></div>
            <div class="gr"><svg><use href="#grip"/></svg></div>
          </div>
        </article>
      </div>
    </div>
    <div class="minrow"><div class="minwin"><svg class="doc"><use href="#rvt"/></svg><span>楼...</span><button><svg><use href="#wres"/></svg></button><button><svg><use href="#wmax"/></svg></button><button><svg><use href="#wcls"/></svg></button></div></div>
  </section>
</main>

<footer class="status">
  <span>就绪</span>
  <div class="sticons">
    <svg viewBox="0 0 16 16"><path d="M0 4c0-4 6-4 8-1 2-3 8-3 8 1s-5 4-6 3v5l3 3-2 1-5-7C4 9 0 7 0 4z" fill="#999"/></svg>
    <svg viewBox="0 0 16 16"><path d="M0 12L12 1h3v8l1 6-4-3H0z" fill="#999"/></svg>
    <svg viewBox="0 0 16 16"><path d="M5 0h5v6l5 5-4 1 1 4-4-4H0V8h5z" fill="#999"/></svg>
    <svg viewBox="0 0 16 16"><path d="M1 1h9l5 9-4 1 1 4-4-3H1z" fill="#999"/></svg>
    <svg viewBox="0 0 16 16"><path d="M5 0v10M0 5h10M3 2l2-2 2 2M2 3L0 5l2 2" fill="none" stroke="#999"/><path d="M8 5v9l2-2 2 4 2-1-2-4h3z" fill="#eee" stroke="#999"/></svg>
    <svg viewBox="0 0 16 16"><circle cx="8" cy="8" r="5" fill="none" stroke="#999" stroke-width="3" stroke-dasharray="3 1"/></svg>
    <svg viewBox="0 0 16 16"><path d="M0 1h16l-6 7v7l-4-2V8z" fill="#bcc4cf" stroke="#444"/></svg><b>:0</b>
  </div>
</footer>

<section class="dialog" role="dialog" aria-labelledby="dt">
  <header><h2 id="dt">族类型</h2><button aria-label="关闭"><svg viewBox="0 0 12 12"><path d="M1 1l10 10M11 1L1 11" stroke="#000"/></svg></button></header>
  <div class="dbody">
    <div class="typeline"><label for="tn">类型名称<span class="mono">(Y):</span></label>
      <select id="tn" class="mono"><option>1500*1500-1500</option></select>
      <button aria-label="新建类型"><svg><use href="#newp"/></svg></button><button aria-label="重命名类型"><svg><use href="#ren"/></svg></button><button aria-label="删除类型"><svg><use href="#delp"/></svg></button></div>
    <div class="psearch"><input type="text" placeholder="搜索参数" aria-label="搜索参数"><button aria-label="搜索"><svg><use href="#mag"/></svg></button></div>
    <div class="grid">
      <div class="clip"><table>
        <colgroup><col class="w1"><col class="w1"><col class="w3"><col></colgroup>
        <thead><tr><th>参数</th><th>值</th><th>公式</th><th>锁定</th></tr></thead>
        <tbody>
          <tr class="gap"><td colspan="4"></td></tr><tr class="grp"><th colspan="4">构造<svg><use href="#chev"/></svg></th></tr>
          <tr><td>墙闭合</td><td>按主体</td><td>=</td><td></td></tr>
          <tr><td>构造类型</td><td></td><td>=</td><td></td></tr>
          <tr class="gap"><td colspan="4"></td></tr><tr class="grp"><th colspan="4">材质和装饰<svg><use href="#chev"/></svg></th></tr>
          <tr><td>木材</td><td class="edit"><input type="text" value="橡木" aria-label="木材"></td><td>=</td><td></td></tr>
          <tr><td>玻璃材质</td><td>&lt;按类别&gt;</td><td>=</td><td></td></tr>
          <tr class="gap"><td colspan="4"></td></tr><tr class="grp"><th colspan="4">尺寸标注<svg><use href="#chev"/></svg></th></tr>
          <tr class="dis"><td>L</td><td>1299.0</td><td>= sin(角度) * R</td><td><input type="checkbox" aria-label="锁定 L" checked></td></tr>
          <tr><td>R</td><td>1500.0</td><td>=</td><td><input type="checkbox" aria-label="锁定 R" checked></td></tr>
          <tr><td>玻璃</td><td>30.0</td><td>=</td><td><input type="checkbox" aria-label="锁定 玻璃"></td></tr>
          <tr><td>窗套厚度</td><td>50.0</td><td>=</td><td><input type="checkbox" aria-label="锁定 窗套厚度"></td></tr>
          <tr><td>窗套宽度</td><td>80.0</td><td>=</td><td><input type="checkbox" aria-label="锁定 窗套宽度"></td></tr>
          <tr class="dis"><td>角度</td><td>60.00°</td><td>= acos(0.5 * 宽度 / R)</td><td><input type="checkbox" aria-label="锁定 角度" checked></td></tr>
          <tr><td>高度</td><td>1500.0</td><td>=</td><td><input type="checkbox" aria-label="锁定 高度" checked></td></tr>
          <tr><td>宽度</td><td>1500.0</td><td>=</td><td><input type="checkbox" aria-label="锁定 宽度" checked></td></tr>
          <tr><td>粗略宽度</td><td></td><td>=</td><td><input type="checkbox" aria-label="锁定 粗略宽度" checked></td></tr>
          <tr><td>粗略高度</td><td></td><td>=</td><td><input type="checkbox" aria-label="锁定 粗略高度" checked></td></tr>
          <tr class="gap"><td colspan="4"></td></tr><tr class="grp"><th colspan="4">分析属性<svg><use href="#chev"/></svg></th></tr>
          <tr><td></td><td></td><td></td><td></td></tr>
        </tbody></table></div>
      <div class="dvs"><svg><use href="#up"/></svg><i></i><svg><use href="#down"/></svg></div>
    </div>
    <div class="dtools">
      <button aria-label="编辑参数"><svg><use href="#pencil"/></svg></button><button aria-label="新建参数"><svg><use href="#newp"/></svg></button><button aria-label="删除参数"><svg><use href="#delp"/></svg></button><button aria-label="上移"><svg><use href="#mup"/></svg></button><button aria-label="下移"><svg><use href="#mdn"/></svg></button><button class="az" aria-label="升序"><svg><use href="#az"/></svg></button><button aria-label="降序"><svg><use href="#za"/></svg></button>
      <button class="btn wide">管理查找表格<span class="mono">(G)</span></button>
    </div>
    <div class="dfoot"><a href="#">如何管理族类型?</a><button class="btn hot">确定</button><button class="btn">取消</button><button class="btn def">应用<span class="mono">(A)</span></button></div>
  </div>
  <svg class="dgrip"><use href="#grip"/></svg>
  <svg class="pointer" viewBox="0 0 12 19"><path d="M1 1v14l3-3 3 6 2-1-2-6h4z" fill="#fff" stroke="#000"/></svg>
</section>

<div class="watermark">
  <svg viewBox="0 0 130 82">
    <path d="M1 58l14-9 12 33H9z" fill="#b9e3c0"/><path d="M6 31l14-12h13l3 63H22z" fill="#74d4cf"/>
    <path d="M20 15L50 0l27 15-3 67H60V72c0-6-14-6-14 0v10H24z" fill="#74cdf3"/>
    <path d="M76 25l20 6 8 22c4 9 11 7 12 0l-7-3 1-2 7 1 3-4 3 3 2-2c2 16-6 23-15 23-10 0-16-8-22-14l-6 26H74z" fill="#8fd0df"/>
    <path d="M81 66l10-8 6 6-4 18H80z" fill="#e3ecaa"/><circle cx="84" cy="45" r="3" fill="#fff"/>
  </svg><span>TUITUISOFT</span>
</div>
<div class="frame"><i class="tl"></i><i class="tr"></i><i class="bl"></i><i class="br"></i><i class="handle"></i></div>
</body>
</html>
```
FILE: styles.css
```css
* { box-sizing: border-box; }
html, body { height: 100%; }
body {
  margin: 0;
  display: flex;
  flex-direction: column;
  height: 100vh;
  overflow: hidden;
  position: relative;
  background: #f5f5f5;
  color: #000;
  font: 12px/16px "Noto Sans", "Noto Sans CJK SC", sans-serif;
}
h2, h3, ul { margin: 0; padding: 0; font-size: 12px; font-weight: normal; }
ul { list-style: none; }
a { color: inherit; text-decoration: none; }
button { margin: 0; padding: 0; border: 0; background: none; font: inherit; color: inherit; display: flex; align-items: center; justify-content: center; white-space: nowrap; }
input, select { font: inherit; color: inherit; margin: 0; border-radius: 0; }
svg { display: block; flex: none; }
.defs { position: absolute; width: 0; height: 0; }
.mono { font-family: "DejaVu Sans Mono", "Noto Sans CJK SC", monospace; font-size: 10px; }
.rvt-text { font: bold 7px "Liberation Sans", sans-serif; fill: #fff; }

/* title bar */
.titlebar { display: flex; height: 24px; background: #d3d3d3; color: #333; flex: none; }
.qat, .info { display: flex; align-items: center; flex: none; }
.titlebar button { width: 24px; height: 22px; }
.titlebar button svg { width: 18px; height: 18px; }
.titlebar .applogo { width: 24px; height: 24px; margin-right: 5px; }
.titlebar .on { background: #b4d8f6; border: 1px solid #1f72bd; }
.bigA { font: bold 20px/22px "Liberation Sans", sans-serif; }
.cr { width: 12px; display: flex; justify-content: center; }
.cr svg { width: 8px; height: 8px; }
.side svg { transform: rotate(-90deg); }
.sep { width: 1px; height: 20px; background: #bdbdbd; margin: 0 3px; }
.info .sep { margin: 0 5px 0 6px; }
.apptitle { flex: 1; display: flex; justify-content: center; align-items: center; gap: 26px; }
.infosearch { width: 180px; height: 22px; border: 1px solid #000; background: #fff; padding: 0 3px; font-style: italic; }
.infosearch::placeholder { color: #777; }
.titlebar .login { width: 109px; justify-content: flex-start; gap: 4px; padding-left: 3px; }
.help b { width: 16px; height: 16px; border: 1px solid #333; border-radius: 50%; background: #fff; color: #1c46a8; font: bold 13px/14px "Liberation Sans", sans-serif; text-align: center; }
.wctl { display: flex; margin-left: 17px; }
.titlebar .wctl svg { width: 12px; height: 12px; }

/* tabs */
.tabs { display: flex; align-items: flex-end; height: 24px; background: #d3d3d3; flex: none; color: #333; }
.tabs a { padding: 0 10px; height: 21px; line-height: 22px; white-space: nowrap; }
.tabs .file { padding: 0 2px 0 1px; margin-right: 0; color: #fff; }
.tabs .cur { background: #f5f5f5; }
.rmin { height: 20px; gap: 2px; margin-left: 22px; }
.rmin svg { width: 8px; height: 8px; }
.rmin .pill { width: 15px; height: 10px; }

/* ribbon */
.ribbon { display: flex; height: 96px; background: #f5f5f5; border-bottom: 1px solid #ccc; flex: none; color: #333; }
.panel { display: flex; flex-direction: column; border-right: 1px solid #e0e0e0; flex: none; }
.panel h2 { height: 18px; line-height: 18px; text-align: center; white-space: nowrap; }
.panel h2 svg { display: inline-block; width: 10px; height: 8px; }
.tools { flex: 1; display: flex; color: #a6a6a6; padding-top: 5px; min-height: 0; }
.tools svg { width: 30px; height: 30px; }
.tools svg.c8 { width: 8px; height: 8px; color: #888; }
.big { flex-direction: column; justify-content: flex-start; align-self: flex-start; line-height: 17px; }
.tools .big > svg:first-child { margin: 1px 0 5px; }
.p-sel { width: 51px; } .p-prop { width: 83px; } .p-clip { width: 76px; } .p-geo { width: 111px; } .p-mod { width: 238px; }
.p-mea { width: 56px; } .p-cre { width: 44px; } .p-gen { width: 286px; border: 0; } .p-fam { width: 110px; border: 0; }
.p-sel .big { margin-left: 14px; }
.tools .cur20 { width: 14px; height: 20px; }
.tools .big > .cur20:first-child { margin: 7px 0 9px; }
.g2 { display: grid; grid-template-columns: 39px 37px; grid-template-rows: 35px 34px; padding-left: 2px; }
.g2 .on { background: #c3dcf5; border: 1px solid #5a9bd5; }
.p-clip .tools { padding-left: 11px; gap: 12px; }
.col3 { display: flex; flex-direction: column; gap: 8px; padding-top: 1px; }
.col3 svg, .geo svg, .g3 svg { width: 16px; height: 16px; }
.geo { display: grid; grid-template-columns: 69px 30px; grid-template-rows: 24px 24px; padding: 17px 0 0 6px; align-content: start; }
.geo button { justify-content: flex-start; gap: 5px; }
.g4 { display: grid; grid-template-columns: repeat(4, 39px); grid-template-rows: 34px 34px; padding-left: 2px; }
.g3 { display: grid; grid-template-columns: repeat(3, 25px); grid-template-rows: repeat(3, 24px); padding-left: 2px; }
.v2 { display: grid; grid-template-rows: 34px 34px; padding-left: 6px; justify-content: start; }
.v2 button { gap: 7px; }
.spread { padding: 5px 5px 0 2px; justify-content: space-around; }
.p-fam .tools { gap: 6px; padding-left: 4px; }
.p-fam .tools .big:first-child { width: 36px; }
.p-fam h2 { background: #c9c5e4; }

/* docks */
.work { flex: 1; display: flex; padding-top: 24px; min-height: 0; background: #f0f0f0; background-clip: content-box; }
.dock { display: flex; flex-direction: column; flex: none; margin-right: 4px; background: #f0f0f0; }
.props { width: 220px; }
.browser { width: 230px; }
.dockhead { display: flex; justify-content: space-between; align-items: center; height: 19px; padding: 0 6px 0 4px; background: #bfcddf; }
.dockhead h2 { font-size: 12px; }
.dockhead svg { width: 8px; height: 8px; }
.dockbody { flex: 1; display: flex; flex-direction: column; margin: 1px; border: 1px solid #6b6b6b; border-right-color: #ddd; border-bottom-color: #ddd; background: #fff; min-height: 0; }
.preview { display: flex; align-items: center; justify-content: space-between; height: 73px; padding: 3px; background: linear-gradient(#f4f4f4, #e6e6e6); border-bottom: 1px solid #ddd; }
.thumb { width: 67px; height: 67px; border: 1px solid #ddd; background: #ebebeb; padding: 6px 0 0 17px; }
.thumb svg { width: 36px; height: 44px; }
.preview .c8 { width: 10px; height: 10px; color: #888; }
.typerow { display: flex; height: 27px; background: #f0f0f0; gap: 6px; padding-top: 1px; flex: none; }
select { appearance: none; border: 1px solid #adadad; padding: 0 4px; }
.typerow select { width: 132px; height: 25px; }
.typerow select, .typeline select {
  background: no-repeat right 5px center / 10px 6px url("data:image/svg+xml,%3Csvg xmlns='http://www.w3.org/2000/svg' viewBox='0 0 10 6'%3E%3Cpath d='M1 1l4 4 4-4' fill='none' stroke='%23555'/%3E%3C/svg%3E"), #e1e1e1;
}
.edittype { gap: 5px; color: #a0a0a0; height: 22px; }
.edittype svg { width: 16px; height: 16px; }
table { border-collapse: separate; border-spacing: 0; table-layout: fixed; }
td, th { padding: 0; font-weight: normal; text-align: left; white-space: nowrap; overflow: hidden; }
.ptable { width: 216px; }
.ptable td { height: 20px; line-height: 18px; border-bottom: 1px dotted #888; border-right: 1px dotted #888; padding-left: 10px; }
.ptable td + td { padding-left: 2px; }
.ptable td.edit { padding: 0; }
.edit input { display: block; width: 100%; height: 19px; border: 1px solid #000; padding: 0 1px; background: #fff; }
.ptable .grp th { height: 20px; padding-left: 2px; background: #dcdcdc; }
.grp svg { float: right; width: 8px; height: 10px; margin: 2px 6px 0 0; }
.dis td { color: #808080; }
input[type=checkbox] { appearance: none; display: block; width: 13px; height: 13px; border: 1px solid #333; background: #fff; margin-left: 1px; }
input[type=checkbox]:checked::after { content: ""; display: block; width: 8px; height: 4px; margin: 2px 0 0 1px; border: solid #333; border-width: 0 0 1px 1px; transform: rotate(-45deg); }
.dockfoot { margin-top: auto; height: 24px; display: flex; justify-content: space-between; align-items: flex-end; background: #f0f0f0; padding: 0 1px 1px 2px; }
.dockfoot a, .dfoot a { color: #0a5fbf; text-decoration: underline; }
.dockfoot button { width: 73px; height: 20px; background: #ccc; border: 1px solid #bfbfbf; color: #838383; }

/* project tree */
.tree { padding: 1px 0 0 4px; }
.tree li { position: relative; }
.tree li::before { content: ""; position: absolute; left: 4px; top: 0; bottom: 0; border-left: 1px dotted #999; }
.tree li:last-child::before { bottom: auto; height: 10px; }
.tree > li:first-child::before { top: 10px; }
.tree ul { margin-left: 20px; }
.node { position: relative; display: flex; align-items: center; height: 20px; }
.node svg { width: 16px; height: 16px; margin-right: 3px; }
.node span { padding: 0 3px; line-height: 20px; }
.node .sel { background: #e5e5e5; }
.ex { position: relative; width: 9px; height: 9px; border: 1px solid #8a8a8a; background: linear-gradient(#335, #335) center / 5px 1px no-repeat, #fff; margin-right: 13px; }
.plus { background: linear-gradient(#335, #335) center / 5px 1px no-repeat, linear-gradient(#335, #335) center / 1px 5px no-repeat, #fff; }
.tree > li > .node > .ex { margin-right: 7px; }
.no { width: 9px; margin-right: 7px; }
.node::before { content: ""; position: absolute; left: 5px; width: 15px; top: 10px; border-top: 1px dotted #999; }
.tree > li > .node::before { width: 10px; }
.leaf .node { padding-left: 22px; }

/* document windows */
.mdi { flex: 1; display: flex; flex-direction: column; min-width: 0; margin-left: 1px; padding-right: 2px; border: solid #666; border-width: 2px 0 0 1px; background: #ababab; }
.tiles { flex: 1; display: grid; grid-template-columns: 730fr 728fr; min-height: 0; }
.tilecol { display: flex; flex-direction: column; min-width: 0; min-height: 0; }
.win { flex: 1 1 0; min-height: 0; display: flex; flex-direction: column; border: 1px solid #4a4a52; border-radius: 6px 6px 0 0; padding: 0 8px 7px; background: linear-gradient(#bfccdb, #d7e3f1 31px, #d9e5f3 32px); color: #8d949c; box-shadow: inset 0 0 0 1px #e9f0f8; }
.win > header { display: flex; align-items: center; height: 31px; gap: 5px; flex: none; padding: 6px 2px 0 0; }
.win > header > svg { width: 16px; height: 16px; }
.win h3 { flex: 1; }
.wb { display: flex; gap: 2px; align-self: flex-start; margin-top: 3px; }
.wb button, .minwin button { width: 32px; height: 18px; border: 1px solid #8b9bb2; border-radius: 2px; background: #cbd8e8; }
.wb svg, .minwin button svg { width: 12px; height: 12px; }
.active { background: linear-gradient(#99b4d1, #b9d1ee 31px, #b9d1ee 32px); color: #222; box-shadow: inset 0 0 0 1px #4fd0ee; }
.active .wb button { background: linear-gradient(#c2d4ea 50%, #a2bbda 50%); border-color: #5a6f90; }
.active .wb .red { background: linear-gradient(#dc8a7c 50%, #b5301f 50%); border-color: #5c1a14; }
.view { flex: 1; display: grid; grid-template: minmax(0, 1fr) 17px / minmax(0, 1fr) 16px; border: 1px solid #6b6b74; border-right-color: #f6f9fc; border-bottom-color: #f6f9fc; min-height: 0; background: #f0f0f0; }
.canvas { background: #fff; overflow: hidden; display: flex; min-height: 0; }
.end { justify-content: flex-end; }
.vs { display: flex; flex-direction: column; align-items: center; justify-content: space-between; padding: 4px 0; min-height: 0; }
.vs svg, .hs svg { width: 10px; height: 10px; }
.vs i { width: 15px; height: 17px; background: #cdcdcd; }
.vc { display: flex; align-items: center; min-width: 0; color: #000; height: 15px; }
.vc > svg { width: 16px; height: 16px; margin-right: 5px; }
.scale { width: 78px; padding-left: 21px; flex: none; font: 10px/16px "DejaVu Sans Mono", monospace; }
.hs { flex: 1; display: flex; align-items: center; justify-content: space-between; padding: 0 4px 0 3px; }
.hs i { width: 17px; height: 15px; background: #cdcdcd; }
.gr { display: flex; align-items: flex-end; justify-content: center; }
.gr svg { width: 10px; height: 10px; }
.minrow { height: 30px; padding: 1px 0 0; flex: none; }
.minwin { display: flex; align-items: center; width: 160px; height: 27px; border: 1px solid #4a4a52; border-radius: 6px 6px 0 0; background: linear-gradient(#c4d2e2, #d7e3f1); padding: 0 5px 0 4px; gap: 3px; color: #8d949c; }
.minwin .doc { width: 16px; height: 16px; }
.minwin span { flex: 1; }
.minwin button { width: 31px; }

/* status bar */
.status { display: flex; justify-content: space-between; align-items: center; height: 25px; padding: 3px 66px 0 2px; background: #d5d5d5; border-top: 1px solid #999; flex: none; }
.sticons { display: flex; align-items: center; gap: 10px; }
.sticons svg { width: 16px; height: 16px; }
.sticons b { font-weight: normal; margin-left: -8px; }

/* family types dialog */
.dialog { position: absolute; left: 897px; top: 223px; width: 499px; border: 1px solid #2c7fc7; background: #f0f0f0; box-shadow: 0 4px 14px rgba(0, 0, 0, .3); }
.dialog > header { display: flex; justify-content: space-between; align-items: center; height: 30px; background: #fff; padding: 0 9px 0 8px; }
.dialog > header svg { width: 12px; height: 12px; }
.dbody { padding: 12px 12px 11px 11px; }
.typeline { display: flex; align-items: center; height: 20px; }
.typeline label { width: 91px; }
.typeline select { width: 292px; height: 20px; margin-right: 2px; flex: none; }
.typeline button { width: 30px; }
.typeline button svg { width: 16px; height: 16px; }
.psearch { display: flex; height: 29px; margin-top: 10px; border: 1px solid #7a7a7a; background: #fff; padding: 1px; }
.psearch input { flex: 1; border: 0; padding: 0 2px; height: 16px; outline: 0; background: none; }
.psearch input::placeholder { color: #757575; }
.psearch button { width: 25px; background: #f0f0f0; }
.psearch button svg { width: 16px; height: 16px; }
.grid { display: flex; justify-content: space-between; height: 410px; margin-top: 13px; border: 1px solid #777; border-width: 2px 1px 1px 2px; border-right-color: #e3e3e3; border-bottom-color: #fff; background: #fff; }
.clip { overflow: hidden; }
.clip table { width: 454px; }
.w1 { width: 133px; } .w3 { width: 141px; }
.clip thead th { height: 24px; text-align: center; background: #f0f0f0; border-right: 1px solid #000; border-bottom: 1px solid #000; }
.clip td { height: 20px; line-height: 18px; border-bottom: 1px dotted #777; border-right: 1px dotted #777; padding-left: 2px; }
.clip .gap td { height: 3px; line-height: 0; border: 0; padding: 0; }
.clip .grp th { height: 22px; background: #99b3d4; font-weight: bold; padding-left: 2px; }
.clip .edit { padding: 0; }
.clip .dis td:nth-child(3) { color: #000; }
.dvs { width: 16px; display: flex; flex-direction: column; align-items: center; background: #f0f0f0; padding: 4px 0; }
.dvs svg { width: 10px; height: 10px; }
.dvs i { width: 16px; height: 257px; background: #cdcdcd; margin: 3px 0 auto; }
.dtools { display: flex; align-items: center; height: 22px; margin-top: 10px; gap: 12px; padding-left: 3px; }
.dtools svg { width: 18px; height: 18px; }
.dtools .az { margin-left: 14px; }
.btn { width: 76px; height: 21px; border: 1px solid #adadad; background: #e1e1e1; }
.dtools .wide { width: 124px; margin-left: auto; }
.dfoot { display: flex; align-items: flex-start; gap: 8px; margin-top: 12px; }
.dfoot a { margin: -3px auto 0 0; }
.dfoot .hot { background: #e5f1fb; border-color: #2c7fc7; }
.dfoot .def { border: 2px solid #0f6fc4; }
.dgrip { position: absolute; right: 2px; bottom: 2px; width: 9px; height: 9px; }
.pointer { position: absolute; left: 275px; top: 578px; width: 12px; height: 19px; }

/* overlays */
.watermark { position: absolute; right: 86px; bottom: 54px; display: flex; align-items: flex-end; gap: 12px; opacity: .65; pointer-events: none; }
.watermark svg { width: 128px; height: 82px; }
.watermark span { font: bold 40px/54px Roboto, sans-serif; color: #7fb0cf; }
.frame { position: absolute; inset: 4px 7px 18px 7px; border: 1px solid #f0605e; pointer-events: none; }
.frame i { position: absolute; width: 25px; height: 25px; border: 0 solid #f00; }
.frame .tl { left: -4px; top: -4px; border-width: 4px 0 0 4px; }
.frame .tr { right: -4px; top: -4px; border-width: 4px 4px 0 0; }
.frame .bl { left: -4px; bottom: -4px; border-width: 0 0 4px 4px; }
.frame .br { right: -4px; bottom: -4px; border-width: 0 4px 4px 0; }
.frame .handle { left: 50%; top: -5px; width: 60px; height: 4px; margin-left: -30px; background: repeating-linear-gradient(90deg, #f33 0 2px, #fbb 2px 4px); }
```
